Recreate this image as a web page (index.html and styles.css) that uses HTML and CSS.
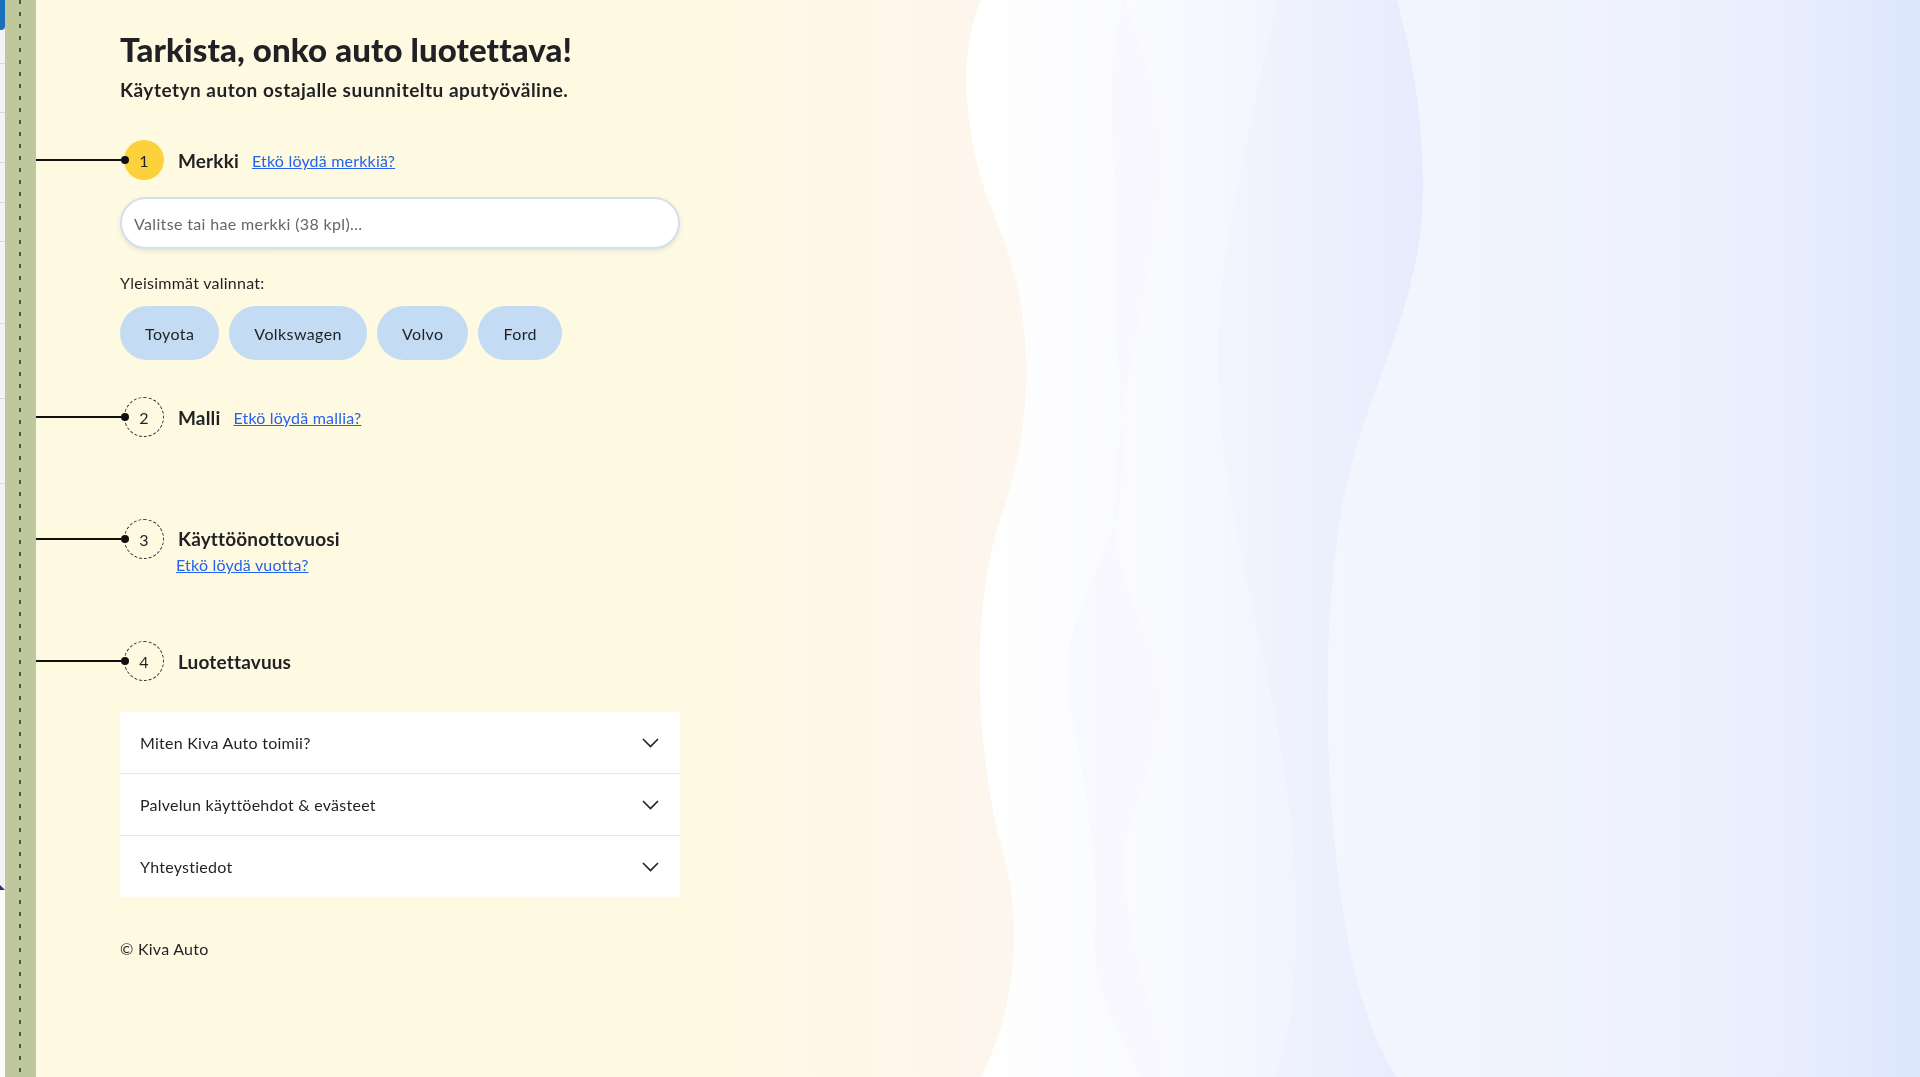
FILE: index.html
```html
<!DOCTYPE html>
<html lang="fi">
<head>
  <meta charset="UTF-8" />
  <meta name="viewport" content="width=device-width, initial-scale=1.0"/>
  <title>Kiva Auto – Tarkista, onko auto luotettava!</title>
  <link rel="stylesheet" href="styles.css">
</head>
<body>
  <svg class="backdrop" viewBox="0 0 1920 1077" preserveAspectRatio="none" aria-hidden="true">
    <defs>
      <linearGradient id="base" x1="0" y1="0" x2="1" y2="0">
        <stop offset="0" stop-color="#fef9e1"/>
        <stop offset="0.37" stop-color="#fef9e2"/>
        <stop offset="0.39" stop-color="#fef8e6"/>
        <stop offset="0.5" stop-color="#fef6ec"/>
        <stop offset="1" stop-color="#f3f5fe"/>
      </linearGradient>
      <linearGradient id="waveA" x1="0" y1="0" x2="1" y2="0">
        <stop offset="0" stop-color="#ffffff"/>
        <stop offset="0.6" stop-color="#f9fafe"/>
        <stop offset="1" stop-color="#f1f4fe"/>
      </linearGradient>
      <linearGradient id="waveB" x1="0" y1="0" x2="1" y2="0">
        <stop offset="0" stop-color="#f3f5fe"/>
        <stop offset="1" stop-color="#e6ecfd"/>
      </linearGradient>
      <linearGradient id="waveC" x1="0" y1="0" x2="1" y2="0">
        <stop offset="0" stop-color="#f4f6fe"/>
        <stop offset="0.55" stop-color="#eef2fe"/>
        <stop offset="0.8" stop-color="#e7edfd"/>
        <stop offset="1" stop-color="#dce6fd"/>
      </linearGradient>
    </defs>
    <rect width="1920" height="1077" fill="url(#base)"/>
    <path fill="url(#waveA)" d="M981,0 C955,60 965,150 1000,230 C1035,320 1035,420 1000,520 C970,610 975,760 1005,860 C1025,940 1010,1020 981,1077 L1274,1077 C1290,1040 1298,980 1296,893 C1290,700 1222,550 1218,370 C1215,270 1245,150 1277,0 Z"/>
    <path fill="#f6f7fe" opacity="0.6" d="M1124,0 C1150,60 1165,120 1160,190 C1150,300 1110,420 1115,529 C1120,600 1160,640 1160,700 C1160,780 1120,820 1124,870 C1130,960 1160,1020 1166,1077 L1140,1077 C1120,1030 1090,990 1095,930 C1100,860 1080,760 1068,690 C1060,620 1110,560 1120,500 C1128,420 1112,330 1115,260 C1120,180 1100,80 1124,0 Z"/>
    <path fill="url(#waveB)" d="M1277,0 C1245,150 1215,270 1218,370 C1222,550 1290,700 1296,893 C1298,980 1290,1040 1274,1077 L1397,1077 C1385,1060 1365,1020 1350,950 C1325,820 1320,650 1340,520 C1355,420 1400,350 1418,250 C1430,180 1420,80 1397,0 Z"/>
    <path fill="url(#waveC)" d="M1397,0 C1420,80 1430,180 1418,250 C1400,350 1355,420 1340,520 C1320,650 1325,820 1350,950 C1365,1020 1385,1060 1397,1077 L1920,1077 L1920,0 Z"/>
  </svg>

  <div class="page">
    <aside class="rail">
      <div class="rail-edge">
        <span class="rail-tab"></span>
        <span class="rail-mark"></span>
      </div>
      <div class="rail-strip"></div>
    </aside>

    <main class="content">
      <h1>Tarkista, onko auto luotettava!</h1>
      <p class="lead">Käytetyn auton ostajalle suunniteltu aputyöväline.</p>

      <section class="step">
        <div class="step-head">
          <span class="step-num active">1</span>
          <div class="step-text">
            <h2>Merkki</h2>
            <a href="#">Etkö löydä merkkiä?</a>
          </div>
        </div>
        <div class="step-body">
          <input class="search" type="text" placeholder="Valitse tai hae merkki (38 kpl)...">
          <p class="label">Yleisimmät valinnat:</p>
          <div class="chips">
            <button class="chip">Toyota</button>
            <button class="chip">Volkswagen</button>
            <button class="chip">Volvo</button>
            <button class="chip">Ford</button>
          </div>
        </div>
      </section>

      <section class="step">
        <div class="step-head">
          <span class="step-num">2</span>
          <div class="step-text">
            <h2>Malli</h2>
            <a href="#">Etkö löydä mallia?</a>
          </div>
        </div>
        <div class="step-body"></div>
      </section>

      <section class="step">
        <div class="step-head">
          <span class="step-num">3</span>
          <div class="step-text stacked">
            <h2>Käyttöönottovuosi</h2>
            <a href="#">Etkö löydä vuotta?</a>
          </div>
        </div>
        <div class="step-body"></div>
      </section>

      <section class="step">
        <div class="step-head">
          <span class="step-num">4</span>
          <div class="step-text">
            <h2>Luotettavuus</h2>
          </div>
        </div>
        <div class="step-body">
          <div class="accordion">
            <div class="acc-row">
              <span>Miten Kiva Auto toimii?</span>
              <svg width="17" height="10" viewBox="0 0 17 10"><polyline points="1,1 8.5,8.5 16,1" fill="none" stroke="#222" stroke-width="1.6"/></svg>
            </div>
            <div class="acc-row">
              <span>Palvelun käyttöehdot &amp; evästeet</span>
              <svg width="17" height="10" viewBox="0 0 17 10"><polyline points="1,1 8.5,8.5 16,1" fill="none" stroke="#222" stroke-width="1.6"/></svg>
            </div>
            <div class="acc-row">
              <span>Yhteystiedot</span>
              <svg width="17" height="10" viewBox="0 0 17 10"><polyline points="1,1 8.5,8.5 16,1" fill="none" stroke="#222" stroke-width="1.6"/></svg>
            </div>
          </div>
        </div>
      </section>

      <footer class="footer">© Kiva Auto</footer>
    </main>
  </div>
</body>
</html>
```

FILE: styles.css
```css
* { box-sizing: border-box; }

html, body { height: 100%; }

body {
  margin: 0;
  font-family: 'Lato', 'Open Sans', sans-serif;
  font-size: 16px;
  letter-spacing: 0.25px;
  color: #1f2125;
  overflow: hidden;
}

.backdrop {
  position: fixed;
  top: 0;
  left: 0;
  width: 100%;
  height: 100%;
  z-index: -1;
}

.page {
  display: flex;
  min-height: 100vh;
}

/* left rail */
.rail {
  display: flex;
  width: 36px;
  flex-shrink: 0;
}
.rail-edge {
  position: relative;
  width: 5px;
  background:
    linear-gradient(#d6d7db, #d6d7db) 0 63px / 100% 1px no-repeat,
    linear-gradient(#d6d7db, #d6d7db) 0 112px / 100% 1px no-repeat,
    linear-gradient(#d6d7db, #d6d7db) 0 162px / 100% 1px no-repeat,
    linear-gradient(#d6d7db, #d6d7db) 0 202px / 100% 1px no-repeat,
    linear-gradient(#d6d7db, #d6d7db) 0 241px / 100% 1px no-repeat,
    linear-gradient(#d6d7db, #d6d7db) 0 323px / 100% 1px no-repeat,
    linear-gradient(#d6d7db, #d6d7db) 0 398px / 100% 1px no-repeat,
    linear-gradient(#d6d7db, #d6d7db) 0 483px / 100% 1px no-repeat,
    linear-gradient(#f3f3f5 0 890px, #fbfbfb 890px);
}
.rail-tab {
  position: absolute;
  top: 0;
  left: 0;
  width: 5px;
  height: 30px;
  background: #1b6fbd;
  border-bottom-right-radius: 4px;
}
.rail-mark {
  position: absolute;
  top: 885px;
  left: 0;
  width: 0;
  height: 0;
  border-left: 5px solid #3a2f6b;
  border-top: 5px solid transparent;
}
.rail-strip {
  flex: 1;
  background:
    repeating-linear-gradient(#4f5148 0 4px, transparent 4px 12px) 14px 0 / 2px 100% no-repeat,
    #bfc79c;
}

/* main column */
.content {
  width: 644px;
  padding: 29px 0 0 84px;
}

h1 {
  margin: 0;
  font-size: 33px;
  line-height: 40px;
  font-weight: 900;
  letter-spacing: 0.1px;
}

.lead {
  margin: 9px 0 0;
  font-size: 19px;
  line-height: 24px;
  font-weight: 700;
  letter-spacing: 0.5px;
}

.step { margin-top: 38px; }
.step + .step { margin-top: 0; }

.step-head {
  position: relative;
  display: flex;
  align-items: flex-start;
  height: 40px;
}
.step-head::before {
  content: "";
  position: absolute;
  left: -84px;
  top: 19px;
  width: 89px;
  height: 2px;
  background: #111;
}
.step-head::after {
  content: "";
  position: absolute;
  left: 1px;
  top: 16px;
  width: 8px;
  height: 8px;
  border-radius: 50%;
  background: #111;
  z-index: 2;
}

.step-num {
  width: 40px;
  height: 40px;
  margin-left: 4px;
  flex-shrink: 0;
  border-radius: 50%;
  border: 1.5px dashed #333;
  display: flex;
  align-items: center;
  justify-content: center;
  font-size: 16px;
  letter-spacing: 0;
  background: transparent;
}
.step-num.active {
  border: none;
  background: #fcd23c;
}

.step-text {
  display: flex;
  align-items: center;
  gap: 13px;
  margin-left: 14px;
  height: 40px;
}
.step-text.stacked {
  flex-direction: column;
  align-items: flex-start;
  gap: 0;
}
.step-text.stacked h2 { line-height: 40px; }
.step-text.stacked a { margin-top: -5px; line-height: 22px; margin-left: -2px; }

h2 {
  margin: 0;
  font-size: 19px;
  font-weight: 700;
  letter-spacing: 0.15px;
}

a {
  color: #2563eb;
  font-size: 16px;
  letter-spacing: 0.2px;
}

.step-body {
  padding: 17px 0 37px;
  min-height: 82px;
}

.search {
  display: block;
  width: 560px;
  height: 52px;
  padding: 0 12px;
  border: 2px solid #d2e1ea;
  border-radius: 26px;
  background: #fff;
  box-shadow: 0 2px 4px rgba(80, 110, 130, 0.15);
  font-family: inherit;
  font-size: 16px;
  letter-spacing: 0.35px;
  color: #333;
  outline: none;
}
.search::placeholder { color: #666; }

.label {
  margin: 23px 0 0;
  line-height: 22px;
}

.chips {
  display: flex;
  gap: 10px;
  margin-top: 12px;
}
.chip {
  height: 54px;
  padding: 0 25px;
  border: none;
  border-radius: 27px;
  background: #c3dcf3;
  font-family: inherit;
  font-size: 16px;
  letter-spacing: 0.4px;
  color: #1f2125;
  cursor: pointer;
}

.accordion {
  margin-top: 14px;
  width: 560px;
  background: #fff;
}
.acc-row {
  display: flex;
  align-items: center;
  justify-content: space-between;
  height: 62px;
  padding: 0 21px 0 20px;
  border-top: 1px solid #e3e6ea;
}
.acc-row:first-child {
  border-top: none;
  height: 61px;
}

.footer {
  margin-top: 4px;
  line-height: 22px;
}
```
